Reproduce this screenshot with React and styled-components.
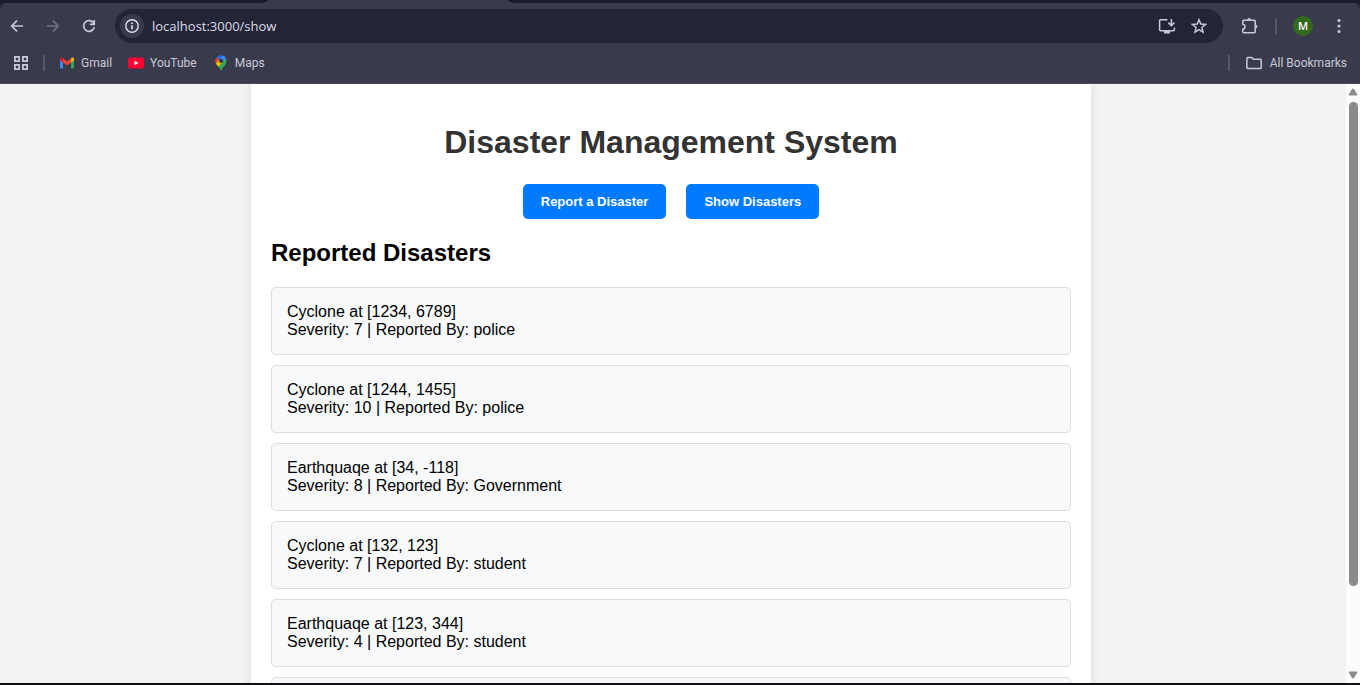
import React from "react";
import styled, { createGlobalStyle } from "styled-components";

const GlobalStyle = createGlobalStyle`
  *, *::before, *::after { box-sizing: border-box; }
  body { margin: 0; font-family: "Liberation Sans", Arial, sans-serif; }
  button, input { font: inherit; border: 0; margin: 0; padding: 0; background: none; }
`;

const Browser = styled.div`
  display: flex;
  flex-direction: column;
  height: 100vh;
  overflow: hidden;
  background: #0e0f18;
`;

const Chrome = styled.header`
  flex: none;
  background: #1c1c2e;
  border-bottom: 1px solid #4a4a58;
  color: #c9c9d6;
  font-family: "Open Sans", "Noto Sans", sans-serif;
`;

const TabStrip = styled.div`
  display: flex;
  height: 3px;
  background: #393b4d;
`;

const InactiveTabs = styled.div`
  background: #1c1c2e;
  flex: ${(p) => (p.$width ? `0 0 ${p.$width}px` : "1")};
  border-radius: ${(p) => (p.$width ? "0 0 8px 0 / 0 0 3px 0" : "0 0 0 8px / 0 0 0 3px")};
`;

const ActiveTab = styled.div`
  flex: 0 0 240px;
`;

const Toolbar = styled.div`
  display: flex;
  align-items: center;
  padding: 6px 7px 0 3px;
  background: #393b4d;
  border-radius: 6px 6px 0 0;
`;

const NavButtons = styled.nav`
  display: flex;
  gap: 8px;
  margin-right: 12px;
`;

const IconButton = styled.button`
  display: grid;
  place-items: center;
  flex: none;
  width: 28px;
  height: 28px;
  border-radius: 50%;
  color: ${(p) => (p.$dim ? "#717280" : "#c6c7da")};
`;

const Omnibox = styled.div`
  display: flex;
  align-items: center;
  flex: 1;
  min-width: 0;
  height: 34px;
  padding: 0 10px 0 5px;
  gap: 4px;
  border-radius: 17px;
  background: #222437;
`;

const SiteInfo = styled.button`
  display: grid;
  place-items: center;
  flex: none;
  width: 24px;
  height: 24px;
  margin-right: 4px;
  border-radius: 50%;
  background: #393b4d;
  color: #e3e3ee;
`;

const Address = styled.input`
  flex: 1;
  min-width: 0;
  height: 24px;
  color: #dcdce8;
  font-size: 13px;
  outline: none;
`;

const Actions = styled.div`
  display: flex;
  align-items: center;
  gap: 12px;
  margin-left: 12px;
`;

const Divider = styled.span`
  flex: none;
  width: 2px;
  height: 16px;
  background: #54566a;
`;

const Avatar = styled.button`
  width: 20px;
  height: 20px;
  margin-left: 4px;
  border-radius: 50%;
  background: #33691e;
  color: #fff;
  font-size: 11px;
  line-height: 20px;
  font-weight: 600;
  text-align: center;
`;

const BookmarksBar = styled.nav`
  display: flex;
  align-items: center;
  height: 40px;
  padding: 0 13px 0 7px;
  gap: 8px;
  background: #393b4d;
  font-family: Roboto, "Open Sans", sans-serif;
  font-size: 12px;
  line-height: 16px;
`;

const BookmarkList = styled.div`
  display: flex;
  flex: 1;
  gap: 16px;
  padding-left: 6px;
`;

const Bookmark = styled.a`
  display: flex;
  align-items: center;
  gap: 6px;
  color: inherit;
  text-decoration: none;
  white-space: nowrap;
`;

const AllBookmarks = styled(Bookmark)`
  gap: 8px;
  padding-left: 8px;
`;

const Viewport = styled.div`
  display: flex;
  flex: 1;
  min-height: 0;
  margin-bottom: 2px;
  background: #f3f3f3;
`;

const Page = styled.div`
  flex: 1;
  min-width: 0;
  overflow: hidden;
  padding-right: 4px;
`;

const Container = styled.main`
  max-width: 840px;
  margin: 0 auto;
  padding: 40px 20px 20px;
  background: #fff;
  box-shadow: 0 0 10px rgba(0, 0, 0, 0.1);
`;

const Title = styled.h1`
  margin: 0 0 23px;
  color: #333;
  font-size: 32px;
  line-height: 37px;
  text-align: center;
`;

const ButtonRow = styled.div`
  display: flex;
  justify-content: center;
  gap: 20px;
  margin-bottom: 20px;
`;

const PrimaryButton = styled.button`
  padding: 10px 18px;
  border-radius: 5px;
  background: #007bff;
  color: #fff;
  font-size: 13px;
  line-height: 15px;
  font-weight: 700;
  cursor: pointer;
`;

const SectionTitle = styled.h2`
  margin: 0 0 20px;
  color: #000;
  font-size: 24px;
  line-height: 28px;
`;

const DisasterList = styled.ul`
  display: flex;
  flex-direction: column;
  gap: 10px;
  margin: 0;
  padding: 0;
  list-style: none;
`;

const DisasterCard = styled.li`
  padding: 15px;
  border: 1px solid #dcdddf;
  border-radius: 5px;
  background: #f8f9fb;
  color: #000;
  font-size: 16px;
  line-height: 18px;
`;

const Line = styled.div``;

const Scrollbar = styled.div`
  display: flex;
  flex-direction: column;
  align-items: center;
  flex: none;
  width: 14px;
  padding: 4px 0;
  gap: 6px;
  background: #fcfcfc;
  color: #8b8b8b;

  svg { display: block; flex: none; }
`;

const Track = styled.div`
  flex: 1;
  width: 9px;
`;

const Thumb = styled.div`
  height: 86%;
  border-radius: 5px;
  background: #8b8b8b;
`;

const Svg = ({ size = 16, children, width = 2, ...rest }) => (
  <svg
    width={size}
    height={size}
    viewBox="0 0 16 16"
    fill="none"
    stroke="currentColor"
    strokeWidth={width}
    aria-hidden="true"
    {...rest}
  >
    {children}
  </svg>
);

const BackIcon = () => (
  <Svg width={1.7}>
    <path d="M14 8H3M8 2.6 2.7 8 8 13.4" />
  </Svg>
);

const ForwardIcon = () => (
  <Svg width={1.7}>
    <path d="M2 8h11M8 2.6 13.3 8 8 13.4" />
  </Svg>
);

const ReloadIcon = () => (
  <Svg width={1.7}>
    <path d="M12.7 5.2A5.4 5.4 0 1 0 13.3 9.2M13.2 2v4.4H8.8" />
  </Svg>
);

const InfoIcon = () => (
  <Svg width={1.4}>
    <circle cx="8" cy="8" r="6.2" />
    <path d="M8 7.2v4M8 4.6v1.5" strokeWidth="1.6" />
  </Svg>
);

const InstallIcon = () => (
  <Svg size={18} width={1.5} viewBox="0 0 18 18">
    <path d="M9.5 2.8H2.6a1 1 0 0 0-1 1v8.9a1 1 0 0 0 1 1h12.8a1 1 0 0 0 1-1v-2.3M13.4 2v6M10.4 5.6l3 3 3-3" />
    <path d="M6 14h6v2.5H6z" fill="currentColor" stroke="none" />
  </Svg>
);

const StarIcon = () => (
  <Svg width={1.5}>
    <path d="m8 1.8 1.8 4.3 4.7.4-3.6 3 1.1 4.6L8 11.7l-4 2.4 1.1-4.6-3.6-3 4.7-.4z" />
  </Svg>
);

const PuzzleIcon = () => (
  <Svg size={18} width={1.6} viewBox="-1 0 18 18">
    <path d="M2.800 3.200h10.400a1 1 0 0 1 1 1v10.600a1 1 0 0 1-1 1H2.800a1 1 0 0 1-1-1v-2.600c2.900-.5 2.900-4.500 0-5V4.200a1 1 0 0 1 1-1z" />
    <path d="M6.200 3a1.900 1.900 0 0 1 3.800 0zM14.500 7.600a1.900 1.900 0 0 1 0 3.800z" fill="currentColor" stroke="none" />
  </Svg>
);

const MenuIcon = () => (
  <Svg fill="currentColor" stroke="none">
    <circle cx="8" cy="2.5" r="1.6" />
    <circle cx="8" cy="8" r="1.6" />
    <circle cx="8" cy="13.5" r="1.6" />
  </Svg>
);

const AppsIcon = () => (
  <Svg width={1.8}>
    <path d="M1.9 1.9h4.200v4.200H1.9zM9.900 1.9h4.200v4.200H9.900zM1.9 9.900h4.200v4.200H1.9zM9.900 9.900h4.200v4.200H9.900z" />
  </Svg>
);

const GmailIcon = () => (
  <Svg stroke="none">
    <path d="M1 4v8.6c0 .5.4.9.9.9H4V6.2z" fill="#4285f4" />
    <path d="M15 4v8.6c0 .5-.4.9-.9.9H12V6.2z" fill="#34a853" />
    <path d="M12 3.5v4L15 5.3V4c0-1.4-1.4-1.9-2.4-1.1z" fill="#fbbc04" />
    <path d="M4 3.5v4L1 5.3V4c0-1.4 1.4-1.9 2.4-1.1z" fill="#c5221f" />
    <path d="M4 3.3 8 6.4l4-3.1v4.2l-4 3-4-3z" fill="#ea4335" />
  </Svg>
);

const YouTubeIcon = () => (
  <Svg stroke="none">
    <rect x="0" y="2.5" width="16" height="11" rx="2.6" fill="#ff0033" />
    <path d="m6.5 5.7 4 2.3-4 2.3z" fill="#fff" />
  </Svg>
);

const MapsIcon = () => (
  <Svg stroke="none">
    <path d="M2.9 8.3C4 10.7 6.6 12 7.4 15c.2.9 1 .9 1.2 0 .8-3.300 4.600-4.700 4.900-9.100 0-.9-.2-1.700-.5-2.400z" fill="#34a853" />
    <path d="M2.9 8.300c.6 1.400 1.600 2.300 2.500 3.500l4.600-5.300-3.800-2.200z" fill="#fbbc04" />
    <path d="M3.800 2.300A5.500 5.500 0 0 0 2.900 8.300l3.500-4.200z" fill="#ea4335" />
    <path d="M3.800 2.300A5.500 5.500 0 0 1 9.800.6L6.300 4.700z" fill="#1a73e8" />
    <path d="M9.800.6A5.500 5.500 0 0 1 13 3.500L9.500 7.600 6.300 4.700z" fill="#4285f4" />
    <circle cx="8" cy="5.900" r="2" fill="#303247" />
  </Svg>
);

const FolderIcon = () => (
  <Svg width={1.5}>
    <path d="M.9 3.300c0-.5.300-.8.800-.8h4l1.700 1.800h7c.4 0 .8.300.8.800v7.600c0 .5-.4.800-.8.800H1.700c-.5 0-.8-.3-.8-.8z" />
  </Svg>
);

const Arrow = ({ down }) => (
  <svg width="10" height="8" viewBox="0 0 10 8" aria-hidden="true">
    <path
      d={down ? "M1 1h8L5.500 7h-1z" : "M1 7h8L5.500 1h-1z"}
      fill="currentColor"
      stroke="currentColor"
      strokeLinejoin="round"
    />
  </svg>
);

const bookmarks = [
  { label: "Gmail", Icon: GmailIcon },
  { label: "YouTube", Icon: YouTubeIcon },
  { label: "Maps", Icon: MapsIcon },
];

const disasters = [
  { type: "Cyclone", location: "1234, 6789", severity: 7, reporter: "police" },
  { type: "Cyclone", location: "1244, 1455", severity: 10, reporter: "police" },
  { type: "Earthquaqe", location: "34, -118", severity: 8, reporter: "Government" },
  { type: "Cyclone", location: "132, 123", severity: 7, reporter: "student" },
  { type: "Earthquaqe", location: "123, 344", severity: 4, reporter: "student" },
];

export default function App() {
  return (
    <Browser>
      <GlobalStyle />
      <Chrome>
        <TabStrip>
          <InactiveTabs $width={268} />
          <ActiveTab />
          <InactiveTabs />
        </TabStrip>
        <Toolbar>
          <NavButtons>
            <IconButton aria-label="Back"><BackIcon /></IconButton>
            <IconButton aria-label="Forward" $dim><ForwardIcon /></IconButton>
            <IconButton aria-label="Reload"><ReloadIcon /></IconButton>
          </NavButtons>
          <Omnibox>
            <SiteInfo aria-label="View site information"><InfoIcon /></SiteInfo>
            <Address aria-label="Address" defaultValue="localhost:3000/show" spellCheck={false} />
            <IconButton aria-label="Install app"><InstallIcon /></IconButton>
            <IconButton aria-label="Bookmark this page"><StarIcon /></IconButton>
          </Omnibox>
          <Actions>
            <IconButton aria-label="Extensions"><PuzzleIcon /></IconButton>
            <Divider />
            <Avatar>M</Avatar>
            <IconButton aria-label="Menu"><MenuIcon /></IconButton>
          </Actions>
        </Toolbar>
        <BookmarksBar>
          <IconButton aria-label="Apps"><AppsIcon /></IconButton>
          <Divider />
          <BookmarkList>
            {bookmarks.map(({ label, Icon }) => (
              <Bookmark key={label} href="#">
                <Icon />
                {label}
              </Bookmark>
            ))}
          </BookmarkList>
          <Divider />
          <AllBookmarks href="#">
            <FolderIcon />
            All Bookmarks
          </AllBookmarks>
        </BookmarksBar>
      </Chrome>
      <Viewport>
        <Page>
          <Container>
            <Title>Disaster Management System</Title>
            <ButtonRow>
              <PrimaryButton>Report a Disaster</PrimaryButton>
              <PrimaryButton>Show Disasters</PrimaryButton>
            </ButtonRow>
            <SectionTitle>Reported Disasters</SectionTitle>
            <DisasterList>
              {disasters.map((d) => (
                <DisasterCard key={d.location}>
                  <Line>{`${d.type} at [${d.location}]`}</Line>
                  <Line>{`Severity: ${d.severity} | Reported By: ${d.reporter}`}</Line>
                </DisasterCard>
              ))}
              <DisasterCard />
            </DisasterList>
          </Container>
        </Page>
        <Scrollbar>
          <Arrow />
          <Track><Thumb /></Track>
          <Arrow down />
        </Scrollbar>
      </Viewport>
    </Browser>
  );
}
